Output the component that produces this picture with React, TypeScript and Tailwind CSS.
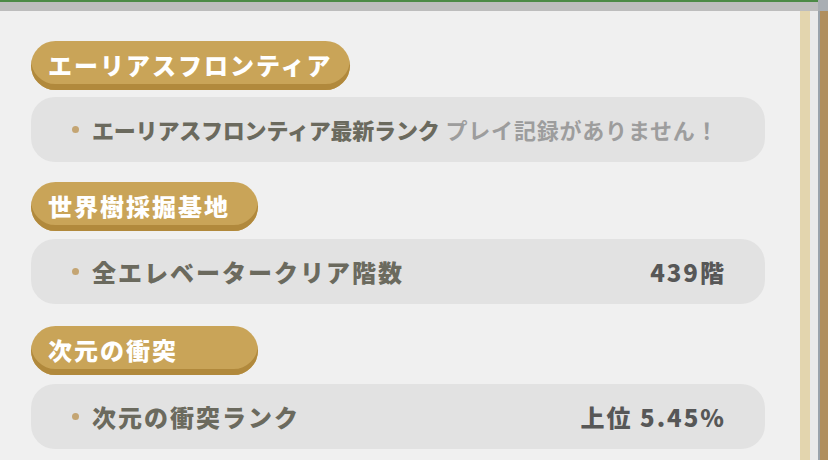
const font = "font-['Noto_Sans_CJK_JP','Noto_Sans',sans-serif]";

function Header({ label, width }: { label: string; width: string }) {
  return (
    <div
      className={`flex h-[49px] ${width} items-center rounded-full bg-[#c9a458] pb-[1px] pl-[17px] shadow-[inset_0_-6px_0_#b1893c] ${font} text-[24px] font-black tracking-[2px] text-white`}
    >
      {label}
    </div>
  );
}

function Row({ children, value }: { children: React.ReactNode; value?: string }) {
  return (
    <div className="mt-[8px] flex h-[65px] items-center rounded-[24px] bg-[#e2e2e2] pl-[41px] pr-[39px]">
      <div className="h-[7px] w-[7px] shrink-0 rounded-full bg-[#c4a573]" />
      <div className={`ml-[13px] flex flex-1 items-center ${font} font-black`}>{children}</div>
      {value && (
        <div className={`${font} text-[24px] font-black tracking-[2px] text-[#575757]`}>{value}</div>
      )}
    </div>
  );
}

export default function App() {
  return (
    <div className="flex h-[460px] w-[828px] overflow-hidden bg-[#f0f0f0]">
      <div className="flex w-[818px] flex-col">
        <div className="h-[2px] bg-[#4c8a46]" />
        <div className="h-[9px] bg-[#bdbdbd]" />
        <div className="flex flex-1">
          <div className="flex flex-1 flex-col pl-[31px] pr-[35px] pt-[30px]">
            <Header label="エーリアスフロンティア" width="w-[319px]" />
            <div className="-mt-[1px]">
              <Row>
                <span className="text-[22px] tracking-[-0.2px] text-[#6b6a5e]">エーリアスフロンティア最新ランク</span>
                <span className="ml-[6px] text-[22px] font-bold tracking-[0.8px] text-[#9d9d9d]">プレイ記録がありません！</span>
              </Row>
            </div>
            <div className="mt-[20px]">
              <Header label="世界樹採掘基地" width="w-[227px]" />
            </div>
            <Row value="439階">
              <span className="text-[24px] tracking-[2px] text-[#6b6a5e]">全エレベータークリア階数</span>
            </Row>
            <div className="mt-[22px]">
              <Header label="次元の衝突" width="w-[227px]" />
            </div>
            <div className="mt-[1px]">
              <Row value="上位 5.45%">
                <span className="text-[24px] tracking-[2px] text-[#6b6a5e]">次元の衝突ランク</span>
              </Row>
            </div>
          </div>
          <div className="w-[10px] bg-[#e3d5ae]" />
          <div className="w-[8px] bg-[#eaeaea]" />
        </div>
      </div>
      <div className="flex w-[10px] flex-col">
        <div className="h-[11px] bg-[#a9aeb3]" />
        <div className="flex flex-1">
          <div className="w-[2px] bg-[#9aa3ab]" />
          <div className="flex-1 bg-[#b08f5f]" />
        </div>
      </div>
    </div>
  );
}
